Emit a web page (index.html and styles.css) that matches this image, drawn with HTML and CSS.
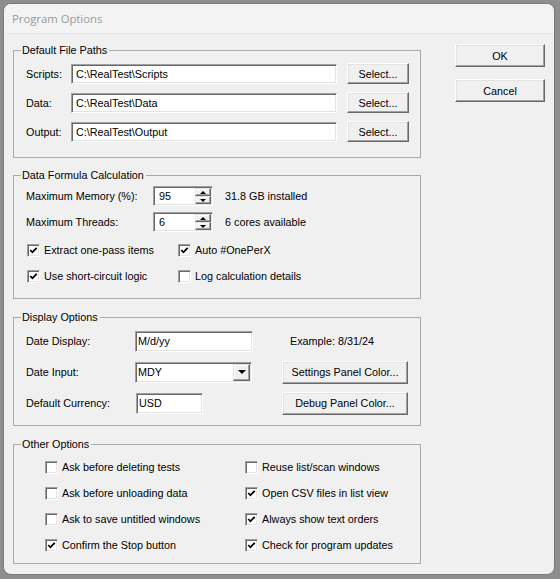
FILE: index.html
```html
<!DOCTYPE html>
<html lang="en">
<head>
  <meta charset="UTF-8">
  <title>Program Options</title>
  <link rel="stylesheet" href="styles.css">
</head>
<body>
  <div class="window">
    <div class="titlebar">Program Options</div>
    <div class="client">
      <div class="groups">

        <div class="group g-paths">
          <div class="group-title">Default File Paths</div>
          <div class="path-rows">
            <div class="path-row">
              <span class="label">Scripts:</span>
              <div class="edit path">C:\RealTest\Scripts</div>
              <button class="btn select-btn">Select...</button>
            </div>
            <div class="path-row">
              <span class="label">Data:</span>
              <div class="edit path">C:\RealTest\Data</div>
              <button class="btn select-btn">Select...</button>
            </div>
            <div class="path-row">
              <span class="label">Output:</span>
              <div class="edit path">C:\RealTest\Output</div>
              <button class="btn select-btn">Select...</button>
            </div>
          </div>
        </div>

        <div class="group g-calc">
          <div class="group-title">Data Formula Calculation</div>
          <div class="calc-rows">
            <div class="calc-row">
              <span class="label">Maximum Memory (%):</span>
              <div class="edit spin">
                <span class="spin-value">95</span>
                <span class="spin-arrows">
                  <span class="spin-btn"><i class="tri-up"></i></span>
                  <span class="spin-btn"><i class="tri-down"></i></span>
                </span>
              </div>
              <span class="info">31.8 GB installed</span>
            </div>
            <div class="calc-row">
              <span class="label">Maximum Threads:</span>
              <div class="edit spin">
                <span class="spin-value">6</span>
                <span class="spin-arrows">
                  <span class="spin-btn"><i class="tri-up"></i></span>
                  <span class="spin-btn"><i class="tri-down"></i></span>
                </span>
              </div>
              <span class="info">6 cores available</span>
            </div>
            <div class="checks">
              <label class="check"><span class="box"><svg width="11" height="11" viewBox="0 0 11 11"><polyline points="2.3,5 4.4,7.3 8.7,2.8" fill="none" stroke="#000" stroke-width="1.8"/></svg></span>Extract one-pass items</label>
              <label class="check"><span class="box"><svg width="11" height="11" viewBox="0 0 11 11"><polyline points="2.3,5 4.4,7.3 8.7,2.8" fill="none" stroke="#000" stroke-width="1.8"/></svg></span>Auto #OnePerX</label>
              <label class="check"><span class="box"><svg width="11" height="11" viewBox="0 0 11 11"><polyline points="2.3,5 4.4,7.3 8.7,2.8" fill="none" stroke="#000" stroke-width="1.8"/></svg></span>Use short-circuit logic</label>
              <label class="check"><span class="box"></span>Log calculation details</label>
            </div>
          </div>
        </div>

        <div class="group g-display">
          <div class="group-title">Display Options</div>
          <div class="display-grid">
            <span class="label">Date Display:</span>
            <div><div class="edit small date-edit">M/d/yy</div></div>
            <span class="example">Example: 8/31/24</span>

            <span class="label">Date Input:</span>
            <div><div class="edit combo"><span class="combo-value">MDY</span><span class="combo-btn"><i class="tri-down big"></i></span></div></div>
            <button class="btn wide-btn">Settings Panel Color...</button>

            <span class="label">Default Currency:</span>
            <div><div class="edit small currency">USD</div></div>
            <button class="btn wide-btn">Debug Panel Color...</button>
          </div>
        </div>

        <div class="group g-other">
          <div class="group-title">Other Options</div>
          <div class="other-grid">
            <label class="check"><span class="box"></span>Ask before deleting tests</label>
            <label class="check"><span class="box"></span>Reuse list/scan windows</label>
            <label class="check"><span class="box"></span>Ask before unloading data</label>
            <label class="check"><span class="box"><svg width="11" height="11" viewBox="0 0 11 11"><polyline points="2.3,5 4.4,7.3 8.7,2.8" fill="none" stroke="#000" stroke-width="1.8"/></svg></span>Open CSV files in list view</label>
            <label class="check"><span class="box"></span>Ask to save untitled windows</label>
            <label class="check"><span class="box"><svg width="11" height="11" viewBox="0 0 11 11"><polyline points="2.3,5 4.4,7.3 8.7,2.8" fill="none" stroke="#000" stroke-width="1.8"/></svg></span>Always show text orders</label>
            <label class="check"><span class="box"><svg width="11" height="11" viewBox="0 0 11 11"><polyline points="2.3,5 4.4,7.3 8.7,2.8" fill="none" stroke="#000" stroke-width="1.8"/></svg></span>Confirm the Stop button</label>
            <label class="check"><span class="box"><svg width="11" height="11" viewBox="0 0 11 11"><polyline points="2.3,5 4.4,7.3 8.7,2.8" fill="none" stroke="#000" stroke-width="1.8"/></svg></span>Check for program updates</label>
          </div>
        </div>

      </div>
      <div class="side">
        <button class="btn dlg">OK</button>
        <button class="btn dlg">Cancel</button>
      </div>
    </div>
  </div>
</body>
</html>
```

FILE: styles.css
```css
:root {
  --face: #f0f0f0;
  --light: #e3e3e3;
  --shadow: #a0a0a0;
  --dark: #696969;
  --frame: #a9a9a9;
}
body {
  margin: 0;
  background: #8e8e8e;
  font-family: "Liberation Sans", Arial, sans-serif;
  font-size: 10.8px;
  color: #000;
}
.window {
  margin: 3px 0 0 3px;
  width: 552px;
  height: 572px;
  box-sizing: border-box;
  border: 1px solid #7a7a7a;
  border-radius: 8px;
  background: var(--face);
  overflow: hidden;
}
.titlebar {
  height: 29px;
  line-height: 29px;
  padding-left: 8px;
  font-family: "Open Sans", "Noto Sans", sans-serif;
  font-size: 11.3px;
  color: #9a9a9a;
  background: #f3f3f3;
  border-bottom: 1px solid #e8e8e8;
}
.client {
  display: flex;
  padding: 10px 0 0 9px;
}
.groups {
  width: 408px;
  margin-top: 6px;
}
.side {
  margin-left: 34px;
  display: flex;
  flex-direction: column;
  gap: 12px;
}

/* group boxes */
.group {
  box-sizing: border-box;
  border: 1px solid var(--frame);
}
.group-title {
  display: table;
  margin: -7px 0 0 7px;
  padding: 0 2px 0 1px;
  line-height: 13px;
  background: var(--face);
}
.g-paths { height: 108px; }
.g-calc { height: 124px; margin-top: 17px; }
.g-display { height: 109px; margin-top: 18px; }
.g-other { height: 120px; margin-top: 18px; }

/* controls */
.edit {
  box-sizing: border-box;
  height: 20px;
  line-height: 18px;
  background: #fff;
  border: 1px solid;
  border-color: var(--shadow) #fff #fff var(--shadow);
  box-shadow: inset 1px 1px var(--dark), inset -1px -1px var(--light);
  padding: 0 4px;
  white-space: nowrap;
}
.btn {
  box-sizing: border-box;
  font: inherit;
  color: #000;
  background: var(--face);
  border: 1px solid;
  border-color: #fff var(--dark) var(--dark) #fff;
  box-shadow: inset -1px -1px var(--shadow), inset 1px 1px var(--light);
  padding: 0;
}
.check {
  display: flex;
  align-items: center;
}
.box {
  box-sizing: border-box;
  width: 13px;
  height: 13px;
  margin-right: 4px;
  background: #fff;
  border: 1px solid;
  border-color: var(--shadow) #fff #fff var(--shadow);
  box-shadow: inset 1px 1px var(--dark), inset -1px -1px var(--light);
  display: flex;
}
.box svg { display: block; }

.tri-up, .tri-down {
  display: block;
  width: 0;
  height: 0;
  border-left: 3px solid transparent;
  border-right: 3px solid transparent;
}
.tri-up { border-bottom: 3px solid #000; }
.tri-down { border-top: 3px solid #000; }
.tri-down.big {
  border-left-width: 4px;
  border-right-width: 4px;
  border-top-width: 4px;
}

/* default file paths */
.path-rows { padding: 2px 0 0 12px; }
.path-row {
  height: 29px;
  display: flex;
  align-items: center;
}
.path-row .label { width: 45px; }
.path { width: 266px; }
.select-btn {
  width: 62px;
  height: 21px;
  margin-left: 10px;
}

/* data formula calculation */
.calc-rows { padding: 1px 0 0 12px; }
.calc-row {
  height: 26px;
  display: flex;
  align-items: center;
}
.calc-row .label { width: 127px; }
.spin {
  width: 60px;
  display: flex;
  padding: 0 0 0 5px;
}
.spin-value { flex: 1; }
.spin-arrows {
  width: 16px;
  display: flex;
  flex-direction: column;
  margin: 1px 1px 1px 0;
}
.spin-btn {
  flex: 1;
  box-sizing: border-box;
  display: flex;
  align-items: center;
  justify-content: center;
  background: var(--face);
  border: 1px solid;
  border-color: var(--light) var(--dark) var(--dark) var(--light);
  box-shadow: inset -1px -1px var(--shadow), inset 1px 1px #fff;
}
.info { margin-left: 12px; }
.checks {
  display: grid;
  grid-template-columns: 151px auto;
  grid-auto-rows: 26px;
  margin-top: 2px;
  padding-left: 1px;
}

/* display options */
.display-grid {
  display: grid;
  grid-template-columns: 109px 147px 126px;
  grid-template-rows: 26px 26px 26px;
  row-gap: 5px;
  padding: 4px 0 0 12px;
  align-items: center;
}
.small {
  height: 21px;
  line-height: 19px;
  padding-left: 2px;
}
.date-edit { width: 118px; }
.currency { width: 67px; margin-left: 1px; }
.example { padding-left: 8px; }
.combo {
  width: 117px;
  height: 21px;
  display: flex;
  padding: 0 0 0 2px;
  line-height: 19px;
}
.combo-value { flex: 1; }
.combo-btn {
  width: 17px;
  margin: 1px 1px 1px 0;
  box-sizing: border-box;
  display: flex;
  align-items: center;
  justify-content: center;
  background: var(--face);
  border: 1px solid;
  border-color: var(--light) var(--dark) var(--dark) var(--light);
  box-shadow: inset -1px -1px var(--shadow), inset 1px 1px #fff;
}
.wide-btn {
  width: 126px;
  height: 23px;
}

/* other options */
.other-grid {
  display: grid;
  grid-template-columns: 200px auto;
  grid-auto-rows: 26px;
  padding: 3px 0 0 31px;
}

.dlg {
  width: 90px;
  height: 23px;
}
```
